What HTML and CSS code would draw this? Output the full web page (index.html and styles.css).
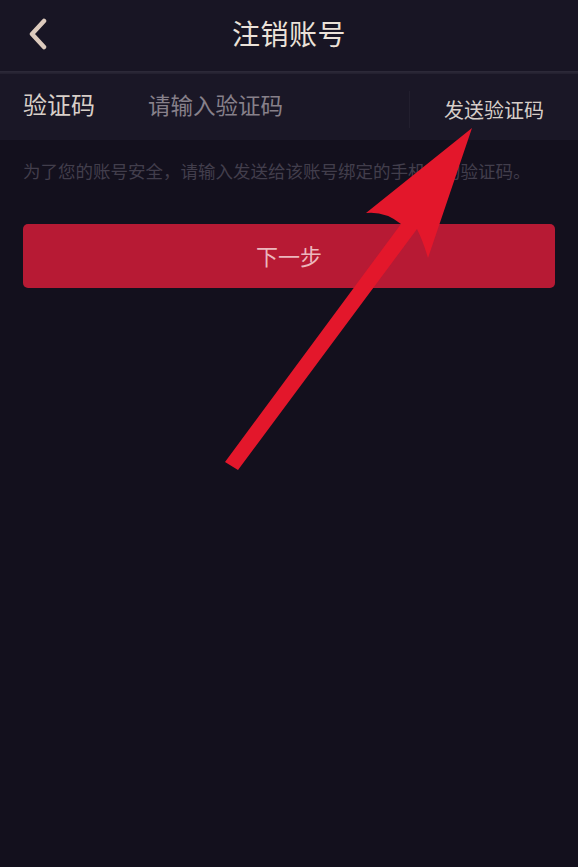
FILE: index.html
```html
<!DOCTYPE html>
<html lang="zh-CN">
<head>
<meta charset="utf-8">
<title>注销账号</title>
<link rel="stylesheet" href="styles.css">
</head>
<body>
<div class="page">
  <header class="topbar">
    <div class="back">
      <svg width="22" height="32" viewBox="0 0 22 32"><path d="M17 3 L5 16 L17 29" fill="none" stroke="#dccabd" stroke-width="4.5" stroke-linecap="round" stroke-linejoin="round"/></svg>
    </div>
    <h1 class="title">注销账号</h1>
    <div class="spacer"></div>
  </header>
  <div class="divider"></div>
  <div class="row">
    <span class="label">验证码</span>
    <span class="placeholder">请输入验证码</span>
    <span class="send">发送验证码</span>
  </div>
  <p class="hint">为了您的账号安全，请输入发送给该账号绑定的手机号的验证码。</p>
  <div class="btn">下一步</div>
  <svg class="arrow" width="578" height="867" viewBox="0 0 578 867">
    <path d="M225 462 L401 224 Q385 211 366 213 L472 128 L428 258 Q423 241 417 229 L238 470 Z" fill="#e3172b"/>
  </svg>
</div>
</body>
</html>
```

FILE: styles.css
```css
html, body {
  margin: 0;
  padding: 0;
}
body {
  background: #13101d;
  font-family: "Noto Sans CJK SC", "Noto Sans", sans-serif;
  width: 578px;
  height: 867px;
  overflow: hidden;
}
.page {
  position: relative;
  width: 578px;
  height: 867px;
}
.topbar {
  height: 71px;
  background: #181524;
  display: grid;
  grid-template-columns: 1fr auto 1fr;
  align-items: center;
}
.back {
  padding-left: 27px;
  padding-bottom: 4px;
  display: flex;
  align-items: center;
}
.title {
  margin: 0;
  font-size: 28px;
  font-weight: 400;
  line-height: 36px;
  color: #ebe2d9;
  padding-bottom: 6px;
  letter-spacing: 0.5px;
}
.divider {
  height: 3px;
  background: linear-gradient(#2e2b3a, #221f2e);
}
.row {
  height: 66px;
  background: #1a1726;
  display: flex;
  align-items: center;
}
.label {
  padding-left: 23px;
  width: 125px;
  font-size: 24px;
  line-height: 30px;
  color: #d8cfc8;
  margin-top: -6px;
}
.placeholder {
  flex: 1;
  font-size: 22.5px;
  line-height: 30px;
  color: #87808a;
  margin-top: -6px;
}
.send {
  align-self: stretch;
  display: flex;
  align-items: center;
  border-left: 1px solid #221f2e;
  margin: 17px 0 12px;
  padding-left: 34px;
  width: 134px;
  font-size: 20px;
  line-height: 26px;
  color: #d6cec9;
}
.hint {
  margin: 19px 0 0;
  padding-left: 23px;
  font-size: 17.5px;
  line-height: 24px;
  color: #423e4c;
  white-space: nowrap;
}
.btn {
  margin: 41px 23px 0;
  height: 64px;
  border-radius: 5px;
  background: #b71a34;
  color: #ecb7bd;
  font-size: 22px;
  display: flex;
  align-items: center;
  justify-content: center;
  padding-bottom: 2px;
  box-sizing: border-box;
}
.arrow {
  position: absolute;
  left: 0;
  top: 0;
  pointer-events: none;
}
```
